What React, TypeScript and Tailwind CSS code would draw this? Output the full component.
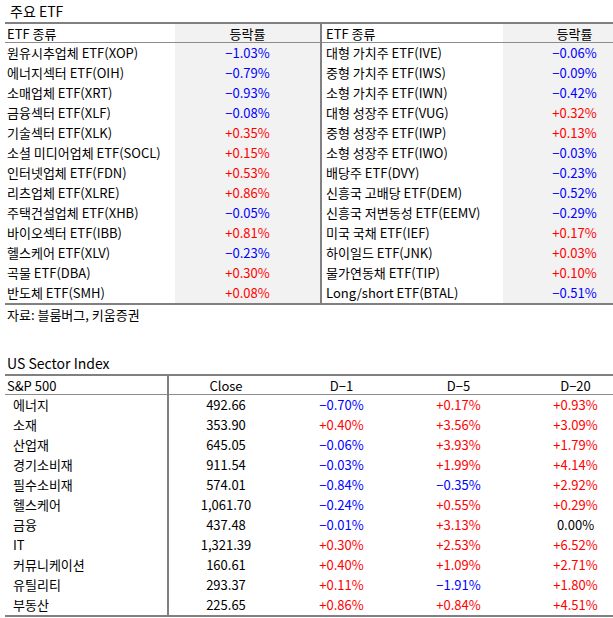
import React from 'react';

type Row = { name: string; value: string };

const leftRows: Row[] = [
  { name: '원유시추업체 ETF(XOP)', value: '−1.03%' },
  { name: '에너지섹터 ETF(OIH)', value: '−0.79%' },
  { name: '소매업체 ETF(XRT)', value: '−0.93%' },
  { name: '금융섹터 ETF(XLF)', value: '−0.08%' },
  { name: '기술섹터 ETF(XLK)', value: '+0.35%' },
  { name: '소셜 미디어업체 ETF(SOCL)', value: '+0.15%' },
  { name: '인터넷업체 ETF(FDN)', value: '+0.53%' },
  { name: '리츠업체 ETF(XLRE)', value: '+0.86%' },
  { name: '주택건설업체 ETF(XHB)', value: '−0.05%' },
  { name: '바이오섹터 ETF(IBB)', value: '+0.81%' },
  { name: '헬스케어 ETF(XLV)', value: '−0.23%' },
  { name: '곡물 ETF(DBA)', value: '+0.30%' },
  { name: '반도체 ETF(SMH)', value: '+0.08%' },
];

const rightRows: Row[] = [
  { name: '대형 가치주 ETF(IVE)', value: '−0.06%' },
  { name: '중형 가치주 ETF(IWS)', value: '−0.09%' },
  { name: '소형 가치주 ETF(IWN)', value: '−0.42%' },
  { name: '대형 성장주 ETF(VUG)', value: '+0.32%' },
  { name: '중형 성장주 ETF(IWP)', value: '+0.13%' },
  { name: '소형 성장주 ETF(IWO)', value: '−0.03%' },
  { name: '배당주 ETF(DVY)', value: '−0.23%' },
  { name: '신흥국 고배당 ETF(DEM)', value: '−0.52%' },
  { name: '신흥국 저변동성 ETF(EEMV)', value: '−0.29%' },
  { name: '미국 국채 ETF(IEF)', value: '+0.17%' },
  { name: '하이일드 ETF(JNK)', value: '+0.03%' },
  { name: '물가연동채 ETF(TIP)', value: '+0.10%' },
  { name: 'Long/short ETF(BTAL)', value: '−0.51%' },
];

const sectors: [string, string, string, string, string][] = [
  ['에너지', '492.66', '−0.70%', '+0.17%', '+0.93%'],
  ['소재', '353.90', '+0.40%', '+3.56%', '+3.09%'],
  ['산업재', '645.05', '−0.06%', '+3.93%', '+1.79%'],
  ['경기소비재', '911.54', '−0.03%', '+1.99%', '+4.14%'],
  ['필수소비재', '574.01', '−0.84%', '−0.35%', '+2.92%'],
  ['헬스케어', '1,061.70', '−0.24%', '+0.55%', '+0.29%'],
  ['금융', '437.48', '−0.01%', '+3.13%', '0.00%'],
  ['IT', '1,321.39', '+0.30%', '+2.53%', '+6.52%'],
  ['커뮤니케이션', '160.61', '+0.40%', '+1.09%', '+2.71%'],
  ['유틸리티', '293.37', '+0.11%', '−1.91%', '+1.80%'],
  ['부동산', '225.65', '+0.86%', '+0.84%', '+4.51%'],
];

function tone(v: string) {
  if (v.startsWith('+')) return 'text-[#ff0000]';
  if (v.startsWith('−')) return 'text-[#0000ff]';
  return 'text-black';
}

function EtfTable({ rows, nameWidth, valueWidth, namePad }: { rows: Row[]; nameWidth: string; valueWidth: string; namePad: string }) {
  return (
    <div className="flex flex-col">
      <div className="flex h-[19px] border-b border-[#8c8c8c]">
        <div className={`${nameWidth} ${namePad} leading-[19px]`}>ETF 종류</div>
        <div className={`${valueWidth} bg-[#f2f2f2] text-center leading-[19px]`}>등락률</div>
      </div>
      {rows.map((r) => (
        <div key={r.name} className="flex h-[20px]">
          <div className={`${nameWidth} ${namePad} whitespace-nowrap leading-[20px]`}>{r.name}</div>
          <div className={`${valueWidth} bg-[#f2f2f2] text-center leading-[20px] ${tone(r.value)}`}>{r.value}</div>
        </div>
      ))}
    </div>
  );
}

export default function App() {
  return (
    <div
      className="h-[618px] w-[613px] overflow-hidden bg-white text-[13px] text-black"
      style={{ fontFamily: '"Noto Sans CJK KR", "Noto Sans", sans-serif' }}
    >
      <div className="w-[660px] pl-[5px]">
        <div className="h-[22px] pl-[5px] text-[14px] leading-[22px]">주요 ETF</div>

        <div className="flex border-y-2 border-[#808080]">
          <div className="border-r-2 border-[#808080]">
            <EtfTable rows={leftRows} nameWidth="w-[170px]" valueWidth="w-[145px]" namePad="pl-[2px]" />
          </div>
          <EtfTable rows={rightRows} nameWidth="w-[181px]" valueWidth="w-[143px]" namePad="pl-[4px]" />
        </div>

        <div className="h-[20px] pl-[2px] leading-[20px]">자료: 블룸버그, 키움증권</div>

        <div className="mt-[27px] h-[22px] pl-[2px] text-[14px] leading-[22px]">US Sector Index</div>

        <div className="border-y-2 border-[#808080]">
          <div className="grid h-[19px] grid-cols-[164px_114px_117px_117px_117px] border-b border-[#8c8c8c] leading-[19px]">
            <div className="border-r-2 border-[#808080] pl-[2px]">S&amp;P 500</div>
            <div className="text-center">Close</div>
            <div className="text-center">D−1</div>
            <div className="text-center">D−5</div>
            <div className="text-center">D−20</div>
          </div>
          {sectors.map(([name, close, d1, d5, d20]) => (
            <div key={name} className="grid h-[20px] grid-cols-[164px_114px_117px_117px_117px] leading-[20px]">
              <div className="border-r-2 border-[#808080] pl-[8px]">{name}</div>
              <div className="text-center">{close}</div>
              <div className={`text-center ${tone(d1)}`}>{d1}</div>
              <div className={`text-center ${tone(d5)}`}>{d5}</div>
              <div className={`text-center ${tone(d20)}`}>{d20}</div>
            </div>
          ))}
        </div>
      </div>
    </div>
  );
}
